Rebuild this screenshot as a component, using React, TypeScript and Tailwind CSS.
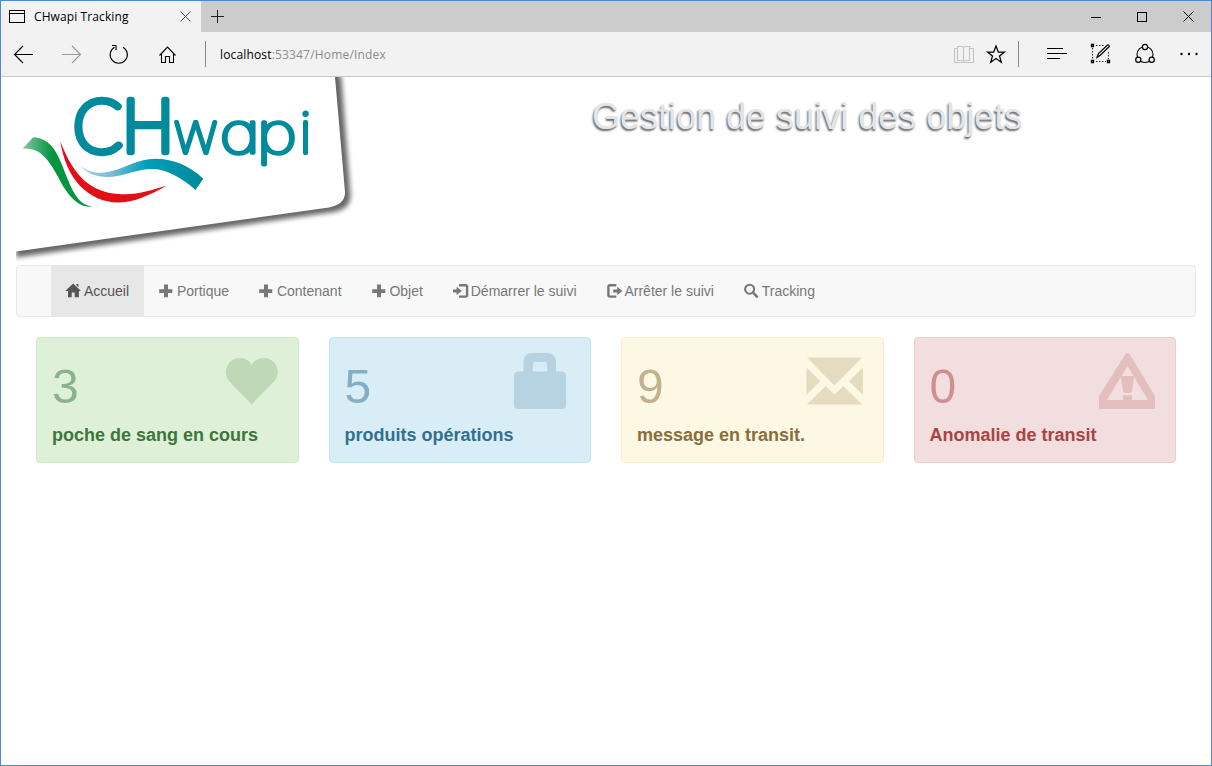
import React from "react";

const plus = "M5 0.500h4v4.700h4.300v3.800H9V13.200H5V9H.2V5.200H5z";

function NavIcon({ name }: { name: string }) {
  return (
    <svg className="block h-[14px] w-[14px] overflow-visible" viewBox="0 0 14 14" fill="currentColor">
      {name === "home" && (
        <path d="M7.200-.600 15 7.100H12.900V13.200H8.700V8.600H5.700V13.200H2V7.100H-.800L7.200-.600zM10.400 0h2v3.200l-2-2z" />
      )}
      {name === "plus" && <path d={plus} />}
      {name === "in" && (
        <>
          <path d="M0 5.400h3.600V2.800L9 6.900 3.600 11V8.400H0z" />
          <path d="M6 1.200h6.600q1.500 0 1.500 1.500v8.400q0 1.500-1.500 1.500H6" fill="none" stroke="currentColor" strokeWidth="2.400" />
        </>
      )}
      {name === "out" && (
        <>
          <path d="M6.200 5.400h4V2.800l5.200 4.100-5.200 4.100V8.400h-4z" />
          <path d="M9.300 1.200H3Q1.400 1.200 1.400 2.800v8.200q0 1.600 1.600 1.600h6.300" fill="none" stroke="currentColor" strokeWidth="2.400" />
        </>
      )}
      {name === "search" && (
        <>
          <circle cx="5.600" cy="5.200" r="4.500" fill="none" stroke="currentColor" strokeWidth="2.100" />
          <path d="M8.800 8.400 13 12.600" stroke="currentColor" strokeWidth="2.600" strokeLinecap="round" />
        </>
      )}
    </svg>
  );
}

const nav = [
  { icon: "home", label: "Accueil", active: true },
  { icon: "plus", label: "Portique" },
  { icon: "plus", label: "Contenant" },
  { icon: "plus", label: "Objet" },
  { icon: "in", label: "Démarrer le suivi" },
  { icon: "out", label: "Arrêter le suivi" },
  { icon: "search", label: "Tracking" },
];

const cards = [
  {
    count: "3",
    label: "poche de sang en cours",
    box: "border-[#d0e9c6] bg-[#dff0d8] text-[#3c763d]",
    icon: (
      <path d="M29.800 51.600C25.300 46 16.300 38 9.800 31C5.300 26 3.800 23.500 3.800 19.500C3.800 11 9.800 5 17.800 5C23.300 5 27.800 8 29.800 12C31.800 8 36.300 5 41.800 5C49.800 5 55.800 11 55.800 19.500C55.800 23.500 54.300 26 49.800 31C43.300 38 34.300 46 29.800 51.600z" />
    ),
  },
  {
    count: "5",
    label: "produits opérations",
    box: "border-[#bce8f1] bg-[#d9edf7] text-[#31708f]",
    icon: (
      <path
        fillRule="evenodd"
        d="M9.500 18.500V9Q9.500 0 18.500 0H33Q42 0 42 9V18.500H48Q52 18.500 52 22.500V52Q52 56 48 56H4Q0 56 0 52V22.500Q0 18.500 4 18.500zM19 18.500H33V11Q33 9 31 9H21Q19 9 19 11z"
      />
    ),
  },
  {
    count: "9",
    label: "message en transit.",
    box: "border-[#faebcc] bg-[#fcf8e3] text-[#8a6d3b]",
    icon: (
      <path
        transform="translate(-.6 0)"
        d="M.5 4.500H55.800L28 32.500zM0 14.500 14 28.300 0 42zM56.500 14.500V42L42.500 28.300zM19.300 33 28 41.500 37 33 55.800 51.500H.500z"
      />
    ),
  },
  {
    count: "0",
    label: "Anomalie de transit",
    box: "border-[#ebccd1] bg-[#f2dede] text-[#a94442]",
    icon: (
      <>
        <path
          fillRule="evenodd"
          d="M26.500 1Q28.500-1 30.500 1L56 43V56H0V43zM28.500 13 8 47H24V42.200H33V47H49z"
        />
        <path d="M21.500 23H35.500L33 37.500Q32.500 40 30.500 40H26.500Q24.500 40 24 37.500z" />
      </>
    ),
  },
];

function Logo() {
  return (
    <svg className="block h-[188px] w-[344px] shrink-0" viewBox="16 77 344 188" role="img" aria-label="CHwapi">
      <defs>
        <filter id="soft" x="-10%" y="-10%" width="120%" height="120%">
          <feGaussianBlur stdDeviation="2.400" />
        </filter>
        <linearGradient id="leaf" gradientUnits="userSpaceOnUse" x1="24" y1="0" x2="52" y2="0">
          <stop offset="0" stopColor="#82c39f" />
          <stop offset="1" stopColor="#009640" />
        </linearGradient>
        <linearGradient id="wave" gradientUnits="userSpaceOnUse" x1="80" y1="0" x2="200" y2="0">
          <stop offset="0" stopColor="#a9cfe6" />
          <stop offset=".25" stopColor="#7fbdd5" />
          <stop offset=".55" stopColor="#009fb9" />
          <stop offset="1" stopColor="#008a9e" />
        </linearGradient>
      </defs>
      <path
        d="M16 257.500 334 212Q351 209 350.500 195L341.500 79L338 70H16z"
        fill="#000"
        fillOpacity=".6"
        filter="url(#soft)"
      />
      <path d="M0 254.200 16 251.500 329 207.500Q345.500 204 345 192L335 77V60H0z" fill="#fff" />
      <path
        d="M22.700 148.600 33.300 137.300C48 138 56 149 62 165C72 190 77 205 92.700 206.500C80 208 71 199 63 186C53 167 43 146 22.700 148.600z"
        fill="url(#leaf)"
      />
      <path
        d="M60.300 141C74 178 92 192 118 194C137 195.500 152 190 167 185.500C150 195 134 202.500 118 202.500C89 202 66 180 60.300 141z"
        fill="#e30f17"
      />
      <path
        d="M80 165.500C90 173 99 174.500 112 171C127 167.500 138 158.800 155 158.800C173 158.800 188 165 203.300 178.700L195.500 190C181 177 166 169 152 169C136 169 123 177 107 177C94 177 86 172 80 165.500z"
        fill="url(#wave)"
      />
      <g
        className="font-[Inter,sans-serif] font-thin [font-feature-settings:'cv11']"
        fill="#008a9e"
        stroke="#008a9e"
        strokeLinejoin="round"
        strokeLinecap="round"
      >
        <text className="font-[Lato,sans-serif]" x="73" y="151.500" fontSize="72" strokeWidth="7.300">C</text>
        <text x="121.800" y="152" fontSize="71.500" strokeWidth="6.600">H</text>
        <text transform="translate(173.500 153.400) scale(.98 1)" fontSize="56" strokeWidth="3.800">w</text>
        <text transform="translate(219.500 153.400) scale(1.250 1)" fontSize="56" strokeWidth="3.400">a</text>
        <text transform="translate(256.500 153.400) scale(1.250 1)" fontSize="56" strokeWidth="3.400">p</text>
        <text x="299.500" y="153.400" fontSize="56" strokeWidth="3.800">i</text>
      </g>
    </svg>
  );
}

export default function App() {
  return (
    <div className="flex h-[766px] w-[1212px] flex-col overflow-hidden border border-[#4a8ad4] bg-white font-['Liberation_Sans',Arial,sans-serif]">
      <div className="flex h-[31px] shrink-0 bg-[#ccc] font-['Open_Sans','Noto_Sans',sans-serif] text-black">
        <div className="flex w-[200px] items-center bg-[#f2f2f2] pr-[10px] pl-2">
          <svg className="h-[13px] w-4" viewBox="0 0 16 13" fill="none" stroke="#000" shapeRendering="crispEdges">
            <path d="M.5.500h15v12H.500zM.500 3.500h15" />
          </svg>
          <span className="ml-[9px] text-[12px] tracking-[0.1px] whitespace-nowrap">CHwapi Tracking</span>
          <svg className="ml-auto h-[11px] w-[11px]" viewBox="0 0 11 11" stroke="#444">
            <path d="M.5.500l10 10M10.500.500l-10 10" />
          </svg>
        </div>
        <svg className="mt-[9px] ml-[10px] h-[13px] w-[13px]" viewBox="0 0 13 13" stroke="#222" shapeRendering="crispEdges">
          <path d="M0 6.500h13M6.500 0v13" />
        </svg>
        <div className="ml-auto flex items-center gap-[36px] pr-[17px]">
          <svg className="h-[10px] w-[10px]" viewBox="0 0 10 10" stroke="#000" shapeRendering="crispEdges"><path d="M0 5.500h10" /></svg>
          <svg className="h-[10px] w-[10px]" viewBox="0 0 10 10" fill="none" stroke="#000" shapeRendering="crispEdges"><path d="M.5.500h9v9h-9z" /></svg>
          <svg className="h-[11px] w-[11px]" viewBox="0 0 11 11" stroke="#000"><path d="M.5.500l10 10M10.500.500l-10 10" /></svg>
        </div>
      </div>

      <div className="flex h-[45px] shrink-0 border-b border-[#c8c8c8] bg-[#f2f2f2] font-['Open_Sans','Noto_Sans',sans-serif]">
        <svg className="h-[44px] w-[206px] shrink-0" viewBox="1 32 206 44" fill="none" stroke="#000" strokeWidth="1.100">
          <path d="M14.500 54.500H33M23 46l-8.500 8.500L23 63" />
          <path d="M62 54.500h18.500M72 46l8.500 8.500L72 63" stroke="#999" />
          <path d="M114.500 47.200A8.600 8.600 0 1 0 123 47.200M112 45.500h4v4.500" />
          <path d="M159.500 55.500l8-8.500 8 8.500M161.500 54v8.500h4v-6h4v6h4V54" />
          <path d="M205.500 41v26" stroke="#888" strokeWidth="1" />
        </svg>
        <div className="ml-[13px] flex items-center pt-[2px] text-[12px] whitespace-nowrap">
          <span className="tracking-[0.150px] text-black">localhost</span>
          <span className="tracking-[0.180px] text-[#8c8c8c]">:53347/Home/Index</span>
        </div>
        <svg className="ml-auto h-[44px] w-[262px] shrink-0" viewBox="949 32 262 44" fill="none" stroke="#000" strokeWidth="1.100">
          <g stroke="#c4c4c4">
            <path d="M963.500 47.500v14M957.500 46.500h4q2 0 2 1 0-1 2-1h4v14h-4q-2 0-2 1 0-1-2-1h-4z" />
            <path d="M957 48.500h-2.500v14h19v-14H970" />
          </g>
          <path d="M996 46l2.300 6h6.200l-5 4 1.800 6.200-5.300-3.700-5.300 3.700 1.800-6.200-5-4h6.200z" strokeWidth="1.250" />
          <path d="M1018.500 41v26" stroke="#888" strokeWidth="1" />
          <path d="M1047 48.500h16M1047 53.500h20M1047 58.500h13" strokeWidth="1" shapeRendering="crispEdges" />
          <path d="M1096 45.500h9M1092.500 48v11M1096 61.500h10M1108.500 52v7" strokeDasharray="1.500 1.500" stroke="#333" />
          <g fill="#f2f2f2">
            <path d="M1091.500 44.500h2v2h-2zM1091.500 60.500h2v2h-2zM1107.500 60.500h2v2h-2z" strokeWidth="1.300" />
            <path d="M1097 57.500l1.500-4 9-8.500q1.500-.5 1.800 1.500l-9 8.800z" strokeWidth="1.200" />
          </g>
          <circle cx="1145" cy="54.500" r="8" />
          <g fill="#f2f2f2" strokeWidth="1.200">
            <circle cx="1145" cy="47" r="2.600" />
            <circle cx="1138.300" cy="59.800" r="2.600" />
            <circle cx="1151.700" cy="59.800" r="2.600" />
          </g>
          <g fill="#000" stroke="none">
            <circle cx="1181.500" cy="54" r="1.200" />
            <circle cx="1189" cy="54" r="1.200" />
            <circle cx="1196.500" cy="54" r="1.200" />
          </g>
        </svg>
      </div>

      <main className="flex flex-col px-[15px]">
        <header className="flex h-[188px]">
          <Logo />
          <h1 className="mt-[20px] ml-[232px] text-[36px] leading-[40px] whitespace-nowrap text-[#e5e5e5] [text-shadow:-1px_2px_2px_#666]">
            Gestion de suivi des objets
          </h1>
        </header>

        <nav className="flex h-[52px] rounded-[4px] border border-[#e7e7e7] bg-[#f8f8f8] pl-[34px] text-[14px]">
          {nav.map((n) => (
            <a
              key={n.label}
              className={
                n.active
                  ? "flex items-center gap-[3.890px] bg-[#e7e7e7] px-[15px] text-[#555]"
                  : "flex items-center gap-[3.890px] px-[15px] text-[#777]"
              }
            >
              <NavIcon name={n.icon} />
              <span className="whitespace-nowrap">{n.label}</span>
            </a>
          ))}
        </nav>

        <section className="mt-5 grid grid-cols-4 gap-[30px] px-5">
          {cards.map((c) => (
            <article key={c.label} className={`flex h-[126px] flex-col rounded-[4px] border p-[15px] ${c.box}`}>
              <div className="flex h-[68px] justify-between pr-[5px]">
                <span className="text-[48px] leading-[68px] opacity-50">{c.count}</span>
                <svg className="h-14 w-14 overflow-visible opacity-20" viewBox="0 0 56 56" fill="currentColor">
                  {c.icon}
                </svg>
              </div>
              <span className="mt-[4px] text-[18px] leading-[20px] font-bold whitespace-nowrap">{c.label}</span>
            </article>
          ))}
        </section>
      </main>
    </div>
  );
}
